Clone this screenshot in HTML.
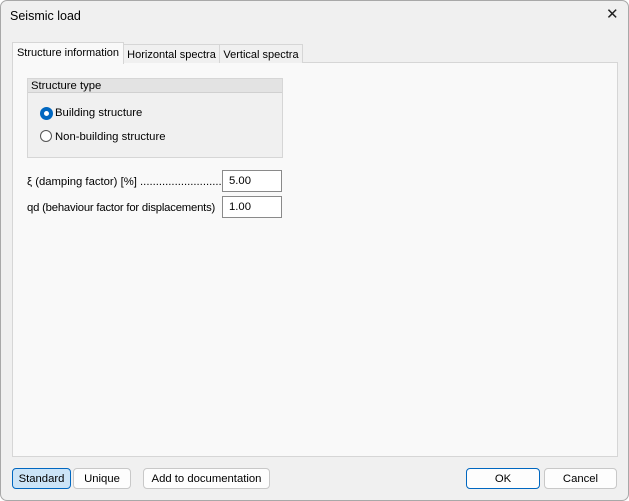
<!DOCTYPE html><html><head><style>
body{margin:0;width:629px;height:501px;background:#fff;font-family:"Liberation Sans",sans-serif;font-size:11.3px;color:#000;position:relative;overflow:hidden}
.win{position:absolute;left:0;top:0;width:627px;height:499px;border:1px solid #a8a8a8;border-radius:7px;background:#f0f0f0}
.a{position:absolute;white-space:nowrap}
.btn{position:absolute;top:468px;height:19px;border:1px solid #c8c8c8;border-radius:4px;background:#fdfdfd;text-align:center;line-height:21px;font-size:11.3px;white-space:nowrap}
.inp{position:absolute;left:222px;border:1px solid #8a8a8a;background:#fff;line-height:20px;padding-left:6px;box-sizing:border-box;width:60px;height:22px}
.tab{position:absolute;border:1px solid #d6d6d6;border-bottom:none;text-align:center;white-space:nowrap;font-size:11px}
</style></head><body><div class="win"></div>
<div class="a" style="left:10px;top:9px;font-size:12.5px">Seismic load</div>
<div class="a" style="left:606px;top:5px;font-size:15px;font-weight:100;color:#222">✕</div>
<div class="a" style="left:12px;top:62px;width:604px;height:393px;border:1px solid #d6d6d6;background:#f9f9f9"></div>
<div class="tab" style="left:12px;top:42px;width:110px;height:21px;background:#f9f9f9;line-height:20px">Structure information</div>
<div class="tab" style="left:123px;top:44px;width:95px;height:18px;background:#f0f0f0;line-height:20px">Horizontal spectra</div>
<div class="tab" style="left:219px;top:44px;width:82px;height:18px;background:#f0f0f0;line-height:20px">Vertical spectra</div>
<div class="a" style="left:27px;top:78px;width:254px;height:78px;border:1px solid #d6d6d6;background:#f0f0f0"></div>
<div class="a" style="left:28px;top:79px;width:254px;height:14px;background:#e3e3e3;border-bottom:1px solid #d0d0d0;line-height:14px;padding-left:3px;box-sizing:border-box">Structure type</div>
<div class="a" style="left:40px;top:107px;width:5px;height:5px;border:4px solid #0067c0;border-radius:50%;background:#fff"></div>
<div class="a" style="left:55px;top:107px">Building structure</div>
<div class="a" style="left:40px;top:130px;width:12px;height:12px;border:1px solid #555;border-radius:50%;background:#fff;box-sizing:border-box"></div>
<div class="a" style="left:55px;top:131px">Non-building structure</div>
<div class="a" style="left:27px;top:176px">ξ (damping factor) [%] ...........................</div>
<div class="a" style="left:27px;top:202px;letter-spacing:-0.2px">qd (behaviour factor for displacements)</div>
<div class="inp" style="top:170px">5.00</div>
<div class="inp" style="top:196px">1.00</div>
<div class="btn" style="left:12px;width:57px;background:#cce4f7;border-color:#0067c0">Standard</div>
<div class="btn" style="left:73px;width:56px">Unique</div>
<div class="btn" style="left:143px;width:125px">Add to documentation</div>
<div class="btn" style="left:466px;width:72px;border-color:#0067c0">OK</div>
<div class="btn" style="left:544px;width:71px">Cancel</div>
</body></html>
